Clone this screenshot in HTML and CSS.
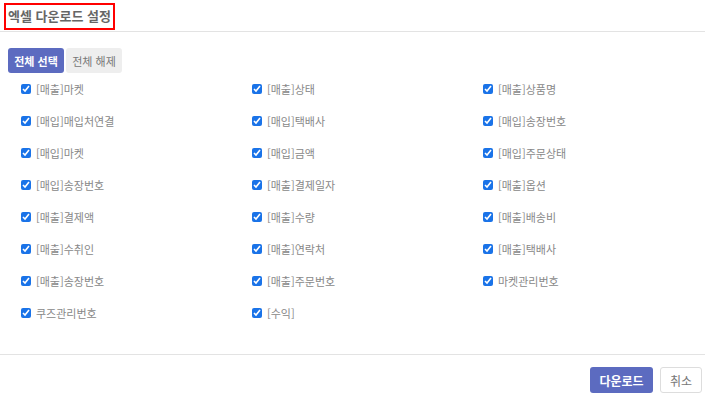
FILE: index.html
```html
<!DOCTYPE html>
<html lang="ko">
<head>
    <meta charset="UTF-8">
    <meta name="viewport" content="width=device-width, initial-scale=1.0">
    <title>엑셀 다운로드 설정</title>
    <link rel="stylesheet" href="styles.css">
</head>
<body>
    <div class="modal">
        <div class="modal-header">
            <h2 class="modal-title">엑셀 다운로드 설정</h2>
        </div>
        <div class="modal-body">
            <div class="toolbar">
                <button class="btn btn-primary" onclick="toggleAll(true)">전체 선택</button>
                <button class="btn btn-light" onclick="toggleAll(false)">전체 해제</button>
            </div>
            <div class="field-grid" id="field-grid"></div>
        </div>
        <div class="modal-footer">
            <button class="btn btn-primary btn-lg">다운로드</button>
            <button class="btn btn-outline btn-lg">취소</button>
        </div>
    </div>
    <script>
        const fields = [
            '[매출]마켓', '[매출]상태', '[매출]상품명',
            '[매입]매입처연결', '[매입]택배사', '[매입]송장번호',
            '[매입]마켓', '[매입]금액', '[매입]주문상태',
            '[매입]송장번호', '[매출]결제일자', '[매출]옵션',
            '[매출]결제액', '[매출]수량', '[매출]배송비',
            '[매출]수취인', '[매출]연락처', '[매출]택배사',
            '[매출]송장번호', '[매출]주문번호', '마켓관리번호',
            '쿠즈관리번호', '[수익]'
        ];
        const grid = document.getElementById('field-grid');

        fields.forEach((name, i) => {
            const label = document.createElement('label');
            label.className = 'field';
            const box = document.createElement('input');
            box.type = 'checkbox';
            box.checked = true;
            box.id = 'field-' + i;
            label.appendChild(box);
            label.appendChild(document.createTextNode(name));
            grid.appendChild(label);
        });

        function toggleAll(value) {
            grid.querySelectorAll('input').forEach(box => box.checked = value);
        }
    </script>
</body>
</html>
```

FILE: styles.css
```css
body {
    margin: 0;
    padding: 0;
    background: #fff;
    font-family: "Noto Sans CJK KR", "Noto Sans", sans-serif;
}

.modal {
    width: 705px;
    height: 398px;
    display: flex;
    flex-direction: column;
}

.modal-header {
    height: 32px;
    padding: 2px 0 0 4px;
    box-sizing: border-box;
    border-bottom: 1px solid #e3e3e3;
}

.modal-title {
    display: inline-block;
    margin: 0;
    padding: 0 2px;
    height: 23px;
    line-height: 22px;
    font-size: 13px;
    font-weight: bold;
    color: #666;
    border: 2px solid #f00;
}

.modal-body {
    flex: 1;
    padding: 16px 0 0 8px;
}

.toolbar {
    display: flex;
    gap: 2px;
}

.btn {
    border: none;
    border-radius: 3px;
    font-family: inherit;
    font-size: 11px;
    cursor: pointer;
    padding: 0;
}

.toolbar .btn {
    width: 56px;
    height: 25px;
}

.btn-primary {
    background: #5c6bc0;
    color: #fff;
    font-weight: bold;
}

.btn-light {
    background: #eeeeee;
    color: #777;
}

.field-grid {
    display: grid;
    grid-template-columns: repeat(3, 231px);
    grid-auto-rows: 32px;
    padding-left: 12px;
}

.field {
    display: flex;
    align-items: center;
    font-size: 11px;
    color: #888;
}

.field input {
    width: 10px;
    height: 10px;
    margin: 0 5px 0 1px;
    accent-color: #1a73e8;
}

.modal-footer {
    height: 44px;
    box-sizing: border-box;
    border-top: 1px solid #e3e3e3;
    display: flex;
    justify-content: flex-end;
    align-items: flex-start;
    gap: 7px;
    padding: 12px 3px 0 0;
}

.btn-lg {
    height: 26px;
    font-size: 12px;
}

.modal-footer .btn-primary {
    width: 63px;
}

.btn-outline {
    width: 42px;
    background: #fff;
    color: #777;
    border: 1px solid #ddd;
}
```
